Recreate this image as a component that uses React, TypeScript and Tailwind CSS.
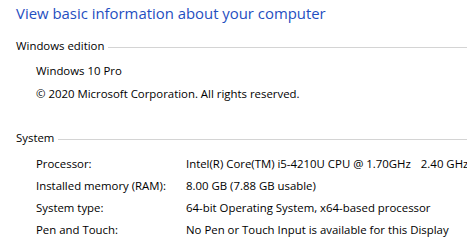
const font = { fontFamily: '"Segoe UI", "Open Sans", "Liberation Sans", sans-serif' }

function Section({ title, children }: { title: string; children: React.ReactNode }) {
  return (
    <div>
      <div className="flex items-center gap-1 pl-4 h-[22px]">
        <span className="text-[#000]">{title}</span>
        <div className="flex-1 h-px bg-[#d4d4d4] mt-[2px]" />
      </div>
      {children}
    </div>
  )
}

function Row({ label, value }: { label: string; value: React.ReactNode }) {
  return (
    <div className="flex h-[22px] items-center pl-9">
      <span className="w-[150px] shrink-0">{label}</span>
      <span className="whitespace-nowrap">{value}</span>
    </div>
  )
}

export default function App() {
  return (
    <div className="w-[467px] h-[250px] bg-white text-black text-[11.4px] overflow-hidden" style={font}>
      <h1 className="pl-4 pt-[1px] h-[35px] text-[14.9px] text-[#1f4fc1] leading-[24px]">
        View basic information about your computer
      </h1>
      <Section title="Windows edition">
        <div className="pl-9 pt-[2px]">
          <div className="h-[23px] flex items-center">Windows 10 Pro</div>
          <div className="h-[23px] flex items-center">© 2020 Microsoft Corporation. All rights reserved.</div>
        </div>
      </Section>
      <div className="h-[22px]" />
      <Section title="System">
        <div className="pt-[4px]">
          <Row
            label="Processor:"
            value={
              <span className="flex">
                <span>Intel(R) Core(TM) i5-4210U CPU @ 1.70GHz</span>
                <span className="ml-[10px]">2.40 GHz</span>
              </span>
            }
          />
          <Row label="Installed memory (RAM):" value="8.00 GB (7.88 GB usable)" />
          <Row label="System type:" value="64-bit Operating System, x64-based processor" />
          <Row label="Pen and Touch:" value="No Pen or Touch Input is available for this Display" />
        </div>
      </Section>
    </div>
  )
}
